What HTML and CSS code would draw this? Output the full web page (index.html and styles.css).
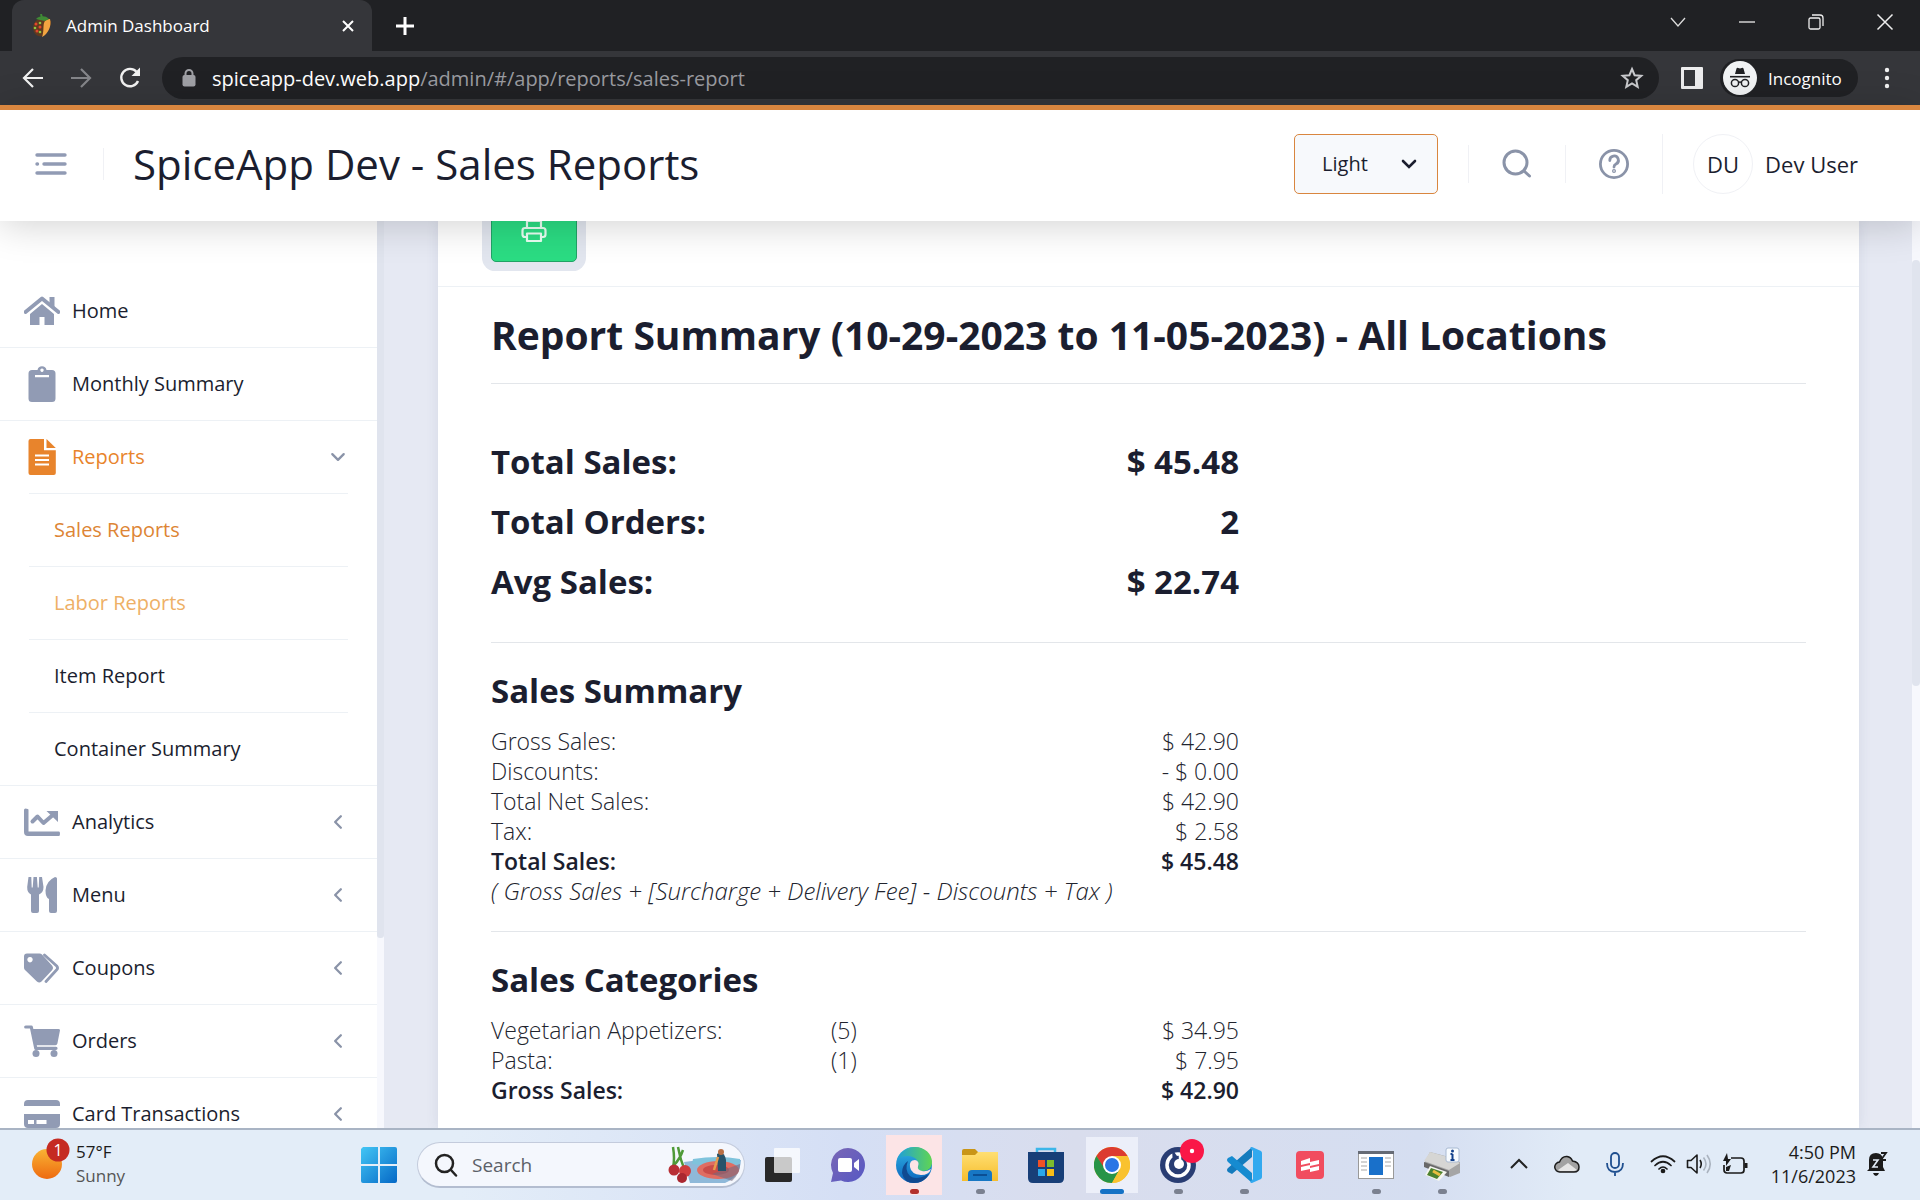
FILE: index.html
```html
<!DOCTYPE html>
<html lang="en">
<head>
<meta charset="utf-8">
<title>Admin Dashboard</title>
<link rel="stylesheet" href="styles.css">
</head>
<body>
<div class="tabstrip">
  <div class="tab">
    <svg class="favicon" width="22" height="24" viewBox="0 0 22 24"><path d="M11 4C4 5 0 12 3 18c2 4 5 5 8 4 6-3 9-9 9-15l-5-3z" fill="#5f3a1f"/><path d="M19 5c2 7-2 15-8 18 2-5 1-10 2-14 1-3 3-4 6-4z" fill="#f2a541"/><path d="M5 5c3-3 9-4 13 0l-4 2-5-1z" fill="#3f8a35"/><path d="M11 4l-1-4" stroke="#3f8a35" stroke-width="2"/><g fill="#e2462b"><circle cx="5" cy="10" r="1.5"/><circle cx="9" cy="13" r="1.5"/><circle cx="6" cy="17" r="1.5"/></g><g fill="#8fc63f"><circle cx="9" cy="9" r="1.3"/><circle cx="4" cy="14" r="1.3"/><circle cx="9" cy="18" r="1.3"/></g></svg>
    <span class="tab-title">Admin Dashboard</span>
    <button class="plain" aria-label="Close tab"><svg width="14" height="14" viewBox="0 0 14 14" fill="none" stroke="#fff" stroke-width="2"><path d="M2 2l10 10M12 2L2 12"/></svg></button>
  </div>
  <button class="plain new-tab" aria-label="New tab"><svg width="20" height="20" viewBox="0 0 20 20" fill="none" stroke="#fff" stroke-width="3"><path d="M10 1v18M1 10h18"/></svg></button>
  <div class="window-controls">
    <button class="plain" aria-label="Tab search"><svg width="18" height="18" viewBox="0 0 18 18" fill="none" stroke="#ddd" stroke-width="1.3"><path d="M2 5l7 8 7-8"/></svg></button>
    <button class="plain" aria-label="Minimize"><svg width="18" height="18" viewBox="0 0 18 18" stroke="#eee" stroke-width="1.3"><path d="M1 9h16"/></svg></button>
    <button class="plain" aria-label="Restore"><svg width="18" height="18" viewBox="0 0 18 18" fill="none" stroke="#eee" stroke-width="1.3"><rect x="2" y="5" width="11" height="11" rx="1.5"/><path d="M5 2h8q3 0 3 3v8"/></svg></button>
    <button class="plain" aria-label="Close"><svg width="18" height="18" viewBox="0 0 18 18" fill="none" stroke="#eee" stroke-width="1.5"><path d="M1.500 1.500l15 15M16.500 1.500l-15 15"/></svg></button>
  </div>
</div>
<div class="toolbar">
  <button class="plain" aria-label="Back"><svg width="22" height="22" viewBox="0 0 22 22" fill="none" stroke="#f1f1f1" stroke-width="2.200"><path d="M21 11H3M11 2l-9 9 9 9"/></svg></button>
  <button class="plain" aria-label="Forward"><svg width="22" height="22" viewBox="0 0 22 22" fill="none" stroke="#85868a" stroke-width="2.200"><path d="M1 11h18M11 2l9 9-9 9"/></svg></button>
  <button class="plain" aria-label="Reload"><svg width="24" height="24" viewBox="0 0 24 24"><path d="M20 15a8.700 8.700 0 1 1-1.500-9.200" fill="none" stroke="#f1f1f1" stroke-width="2.400"/><path d="M22 1.500V10h-8.500z" fill="#f1f1f1"/></svg></button>
  <div class="omnibox" role="textbox" aria-label="Address">
    <svg width="14" height="18" viewBox="0 0 14 18"><rect x="0.500" y="6" width="13" height="11.500" rx="2" fill="#9fa0a5"/><path d="M3.500 7V4.500a3.500 3.500 0 0 1 7 0V7" fill="none" stroke="#9fa0a5" stroke-width="2"/></svg>
    <span class="url"><b>spiceapp-dev.web.app</b>/admin/#/app/reports/sales-report</span>
    <button class="plain" aria-label="Bookmark"><svg width="24" height="24" viewBox="0 0 24 24" fill="none" stroke="#c9cacd" stroke-width="2"><path d="M12 3l2.600 6.200 6.700.6-5.100 4.400 1.500 6.600L12 17.300l-5.700 3.500 1.500-6.600-5.100-4.400 6.700-.6z"/></svg></button>
  </div>
  <button class="plain side-panel" aria-label="Side panel"><svg width="22" height="22" viewBox="0 0 22 22"><rect width="22" height="22" rx="1" fill="#ededee"/><rect x="3" y="3" width="11" height="16" fill="#35363a"/></svg></button>
  <div class="incognito">
    <svg width="34" height="34" viewBox="0 0 34 34"><circle cx="17" cy="17" r="17" fill="#f1f3f4"/><path d="M12 13l1.500-5.500q.5-1 1.700-.5l1.800.6 1.800-.6q1.200-.5 1.700.5L22 13z" fill="#202124"/><path d="M7 15.700h20" stroke="#202124" stroke-width="1.600"/><g fill="none" stroke="#202124" stroke-width="1.500"><circle cx="12" cy="22" r="3.600"/><circle cx="22" cy="22" r="3.600"/><path d="M15.500 21.500q1.500-1 3 0"/></g></svg>
    <span>Incognito</span>
  </div>
  <button class="plain" aria-label="Menu"><svg width="6" height="22" viewBox="0 0 6 22" fill="#f1f1f1"><circle cx="3" cy="3" r="2.200"/><circle cx="3" cy="11" r="2.200"/><circle cx="3" cy="19" r="2.200"/></svg></button>
</div>

<header class="app-header">
  <button class="plain burger" aria-label="Toggle menu"><svg width="32" height="24" viewBox="0 0 32 24" stroke="#919bb4" stroke-width="3.400" stroke-linecap="round"><path d="M2 3h28M9 12h21M2 12h.5M2 21h28"/></svg></button>
  <h1>SpiceApp Dev - Sales Reports</h1>
  <div class="header-tools">
    <label class="theme"><select aria-label="Theme"><option>Light</option></select><svg class="theme-arrow" width="16" height="12" viewBox="0 0 16 12" fill="none" stroke="#1b1e2f" stroke-width="2.600" stroke-linecap="round"><path d="M2 3l6 6 6-6"/></svg></label>
    <div class="tool"><button class="plain" aria-label="Search"><svg width="32" height="32" viewBox="0 0 32 32" fill="none" stroke="#8a93a8" stroke-width="3" stroke-linecap="round"><circle cx="14.500" cy="14.500" r="11.500"/><path d="M23 23l5.500 5"/></svg></button></div>
    <div class="tool"><button class="plain" aria-label="Help"><svg width="32" height="32" viewBox="0 0 32 32" fill="none" stroke="#8a93a8" stroke-width="2.800" stroke-linecap="round"><circle cx="16" cy="16" r="13.600"/><path d="M11.800 12.500a4.300 4.300 0 1 1 6.200 3.600q-2 1-2 3"/><circle cx="16" cy="23" r=".6"/></svg></button></div>
    <div class="user"><span class="avatar">DU</span><span>Dev User</span></div>
  </div>
</header>

<div class="workspace">
  <nav class="sidebar">
    <a class="item" href="#"><svg class="ico" viewBox="0 0 36 36"><path d="M1.500 19L18 5.500 34.500 19" fill="none" stroke="currentColor" stroke-width="3.800" stroke-linecap="round" stroke-linejoin="round"/><path d="M25.500 4h5v11l-5-4zM6 21l12-10 12 10v11h-9.500v-8h-5v8H6z" fill="currentColor"/></svg><span>Home</span></a>
    <a class="item" href="#"><svg class="ico" viewBox="0 0 36 36"><path fill="currentColor" fill-rule="evenodd" d="M8 4h5.500a4.600 4.600 0 0 1 9 0H28q3.500 0 3.500 3.500v25Q31.500 36 28 36H8q-3.500 0-3.500-3.500v-25Q4.500 4 8 4zm10-1.500a1.700 1.700 0 1 0 .01 0zM11 9v2.200h14V9z"/></svg><span>Monthly Summary</span></a>
    <a class="item active with-sub" href="#"><svg class="ico" viewBox="0 0 36 36"><path fill="currentColor" fill-rule="evenodd" d="M6 0h14v11.200h11.800V34q0 2-2 2H6.500q-2 0-2-2V2q0-2 2-2zM11 15.500v2h14v-2zM11 20v2h14v-2zM11 24.500v2h14v-2z"/><path d="M22.500 0l9.300 9H22.500z" fill="currentColor"/></svg><span>Reports</span><svg class="chev" viewBox="0 0 14 14"><path d="M2 4.500l5 5 5-5"/></svg></a>
    <div class="sub">
      <a class="current" href="#">Sales Reports</a>
      <a class="hovered" href="#">Labor Reports</a>
      <a href="#">Item Report</a>
      <a href="#">Container Summary</a>
    </div>
    <a class="item" href="#"><svg class="ico" viewBox="0 0 36 36"><path d="M1.500 4.500q3 0 3 1.500v21.500H35q1 0 1 2.200t-1 2.300H4q-4 0-4-4V6q0-1.500 1.500-1.500zM22.500 7H34v11z" fill="currentColor"/><path d="M8.500 17.500l5-5 6 6.500L30 10" fill="none" stroke="currentColor" stroke-width="4" stroke-linecap="round" stroke-linejoin="round"/></svg><span>Analytics</span><svg class="chev" viewBox="0 0 14 14"><path d="M9.500 2l-5 5 5 5"/></svg></a>
    <a class="item" href="#"><svg class="ico" viewBox="0 0 36 36"><path fill="currentColor" d="M4.500 0h2.800l.4 10.500h1L9.500 0h3.400l.8 10.500h1L15.200 0H18l1.500 10q0 5.500-4.500 7.500V34q0 2-2 2H9q-2 0-2-2V17.500Q3 15.500 3.200 10zM33 1.500V34q0 2-2 2h-4q-2 0-2-2V22q-3.500-1.500-3.500-8.500Q22 4 31 0q2 0 2 1.500z"/></svg><span>Menu</span><svg class="chev" viewBox="0 0 14 14"><path d="M9.500 2l-5 5 5 5"/></svg></a>
    <a class="item" href="#"><svg class="ico" viewBox="0 0 36 36"><path fill="currentColor" fill-rule="evenodd" d="M3 3.500h12.500q1.500 0 2.500 1L28 15.500q2 2.500 0 4.700L17.500 31.500q-2.300 2-4.600 0L1 20q-1-1-1-2.500v-11q0-3 3-3zM6 7a2.700 2.700 0 1 0 .01 0z"/><path d="M20.500 5L32.700 16q1.700 2 0 3.800L22 31.500" fill="none" stroke="currentColor" stroke-width="2.800" stroke-linecap="round"/></svg><span>Coupons</span><svg class="chev" viewBox="0 0 14 14"><path d="M9.500 2l-5 5 5 5"/></svg></a>
    <a class="item" href="#"><svg class="ico" viewBox="0 0 36 36"><path d="M1.700 4h5.600l4.500 21.300H32" fill="none" stroke="currentColor" stroke-width="3.200" stroke-linecap="round" stroke-linejoin="round"/><path d="M7 6h27.500q1.800 0 1.400 1.800l-2.500 12.700q-.4 1.700-2 1.700H10.300z" fill="currentColor"/><circle cx="12" cy="30.500" r="3.500" fill="currentColor"/><circle cx="30" cy="30.500" r="3.500" fill="currentColor"/></svg><span>Orders</span><svg class="chev" viewBox="0 0 14 14"><path d="M9.500 2l-5 5 5 5"/></svg></a>
    <a class="item" href="#"><svg class="ico" viewBox="0 0 36 36"><path fill="currentColor" fill-rule="evenodd" d="M4 4h28q4 0 4 4v2H0V8q0-4 4-4zM0 18h36v10q0 4-4 4H4q-4 0-4-4zm4 6v4h6v-4zm8.500 0v4h10v-4z"/></svg><span>Card Transactions</span><svg class="chev" viewBox="0 0 14 14"><path d="M9.500 2l-5 5 5 5"/></svg></a>
  </nav>
  <div class="side-scroll"><div class="side-thumb"></div></div>
  <main class="content">
    <section class="card">
      <div class="card-head"><button class="print" aria-label="Print"><svg width="26" height="24" viewBox="0 0 26 24" fill="none" stroke="#e9fff3" stroke-width="2.200" stroke-linejoin="round"><path d="M6 9V2h14v7M6 18H4q-2.500 0-2.500-2.500v-4Q1.500 9 4 9h18q2.500 0 2.500 2.500v4Q24.500 18 22 18h-2M6 14.500h14V22H6z"/></svg></button></div>
      <div class="report">
        <h2>Report Summary (10-29-2023 to 11-05-2023) - All Locations</h2>
        <hr>
        <table class="totals">
          <tr><th>Total Sales:</th><td>$ 45.48</td></tr>
          <tr><th>Total Orders:</th><td>2</td></tr>
          <tr><th>Avg Sales:</th><td>$ 22.74</td></tr>
        </table>
        <hr>
        <h3>Sales Summary</h3>
        <table class="lines">
          <tr><td>Gross Sales:</td><td></td><td class="amount">$ 42.90</td></tr>
          <tr><td>Discounts:</td><td></td><td class="amount">- $ 0.00</td></tr>
          <tr><td>Total Net Sales:</td><td></td><td class="amount">$ 42.90</td></tr>
          <tr><td>Tax:</td><td></td><td class="amount">$ 2.58</td></tr>
          <tr class="sum"><td>Total Sales:</td><td></td><td class="amount">$ 45.48</td></tr>
          <tr><td colspan="3"><em>( Gross Sales + [Surcharge + Delivery Fee] - Discounts + Tax )</em></td></tr>
        </table>
        <hr>
        <h3>Sales Categories</h3>
        <table class="lines">
          <tr><td>Vegetarian Appetizers:</td><td>(5)</td><td class="amount">$ 34.95</td></tr>
          <tr><td>Pasta:</td><td>(1)</td><td class="amount">$ 7.95</td></tr>
          <tr class="sum"><td>Gross Sales:</td><td></td><td class="amount">$ 42.90</td></tr>
        </table>
      </div>
    </section>
  </main>
  <div class="page-scroll"><div class="page-thumb"></div></div>
</div>

<footer class="taskbar">
  <div class="weather">
    <svg width="42" height="46" viewBox="0 0 42 46"><defs><linearGradient id="sun" x2="0" y2="1"><stop stop-color="#f9b434"/><stop offset="1" stop-color="#ee6a10"/></linearGradient></defs><circle cx="17" cy="27" r="15" fill="url(#sun)"/><circle cx="28" cy="13" r="11.500" fill="#c52b22"/><text x="28" y="19" class="badge-text">1</text></svg>
    <div><div>57°F</div><div class="dim">Sunny</div></div>
  </div>
  <div class="dock">
    <button class="plain app" aria-label="Start"><svg width="36" height="36" viewBox="0 0 36 36"><defs><linearGradient id="win" x2="1" y2="1"><stop stop-color="#43c6f5"/><stop offset="1" stop-color="#0568c6"/></linearGradient></defs><path fill="url(#win)" d="M2 0h15v17H0V2zM19 0h15q2 0 2 2v15H19zM0 19h17v17H2q-2 0-2-2zM19 19h17v15q0 2-2 2H19z"/></svg></button>
    <label class="search">
      <svg width="24" height="24" viewBox="0 0 24 24" fill="none" stroke="#222" stroke-width="2.500" stroke-linecap="round"><circle cx="10.500" cy="10.500" r="8.500"/><path d="M17 17l5 5.500"/></svg>
      <input type="text" placeholder="Search" aria-label="Search">
      <svg width="74" height="38" viewBox="0 0 74 38"><path d="M16 16q28-5 57-2-1 17-16 23H22z" fill="#8fb9d9"/><path d="M25 13q25-4 47 0v5q-20 4-48 0z" fill="#7fc3dc"/><ellipse cx="50" cy="24" rx="21" ry="9" fill="#df6d62"/><ellipse cx="48" cy="24" rx="13" ry="5" fill="#c94c48"/><path d="M44 28l28-10q1 8-8 17z" fill="#776b80" opacity=".6"/><path d="M49 8q7-4 9 6v11h-8z" fill="#27536a"/><circle cx="53" cy="6" r="3" fill="#b86f45"/><path d="M50 11l-4 13" stroke="#e79c4e" stroke-width="2.500"/><path d="M5 1q2 12 0 20M10 1q2 12 7 24M15 4q-3 9-9 15" fill="none" stroke="#4e9a37" stroke-width="2.500"/><circle cx="6" cy="24" r="5.500" fill="#b82f35"/><circle cx="17" cy="25" r="6" fill="#cf3c3d"/><circle cx="14" cy="32" r="5" fill="#aa2730"/></svg>
    </label>
    <button class="plain app" aria-label="Task view"><svg width="36" height="36" viewBox="0 0 36 36"><rect x="1" y="10" width="27" height="25" rx="2" fill="#292929"/><rect x="10" y="1" width="26" height="25" rx="1" fill="#fff" opacity=".75"/></svg></button>
    <button class="plain app" aria-label="Chat"><svg width="36" height="36" viewBox="0 0 36 36"><defs><linearGradient id="chat" x2="1" y2="1"><stop stop-color="#7a67b5"/><stop offset="1" stop-color="#5658c4"/></linearGradient></defs><path d="M18 1a17 17 0 1 1-7 32.500L1 35l2-9A17 17 0 0 1 18 1z" fill="url(#chat)"/><rect x="8" y="11" width="14" height="14" rx="2" fill="#fff"/><path d="M24 16l5-4v12l-5-4z" fill="#fff"/></svg></button>
    <button class="plain app edge-tile" aria-label="Edge"><svg width="36" height="36" viewBox="0 0 36 36"><defs><linearGradient id="e1" y2="1" x2="0"><stop stop-color="#2fb5e4"/><stop offset="1" stop-color="#0d63bd"/></linearGradient><linearGradient id="e2" x2="1"><stop stop-color="#1f9fd9"/><stop offset="1" stop-color="#60d552"/></linearGradient></defs><circle cx="18" cy="18" r="18" fill="url(#e1)"/><path d="M1 13C4 4 12 0 19 0c10 0 17 7 17 15 0 6-4 9-9 9-4 0-6-2-5-4 2-6-3-11-10-11C7 9 3 11 1 13z" fill="url(#e2)"/><path d="M12 14q-4 9 2 15 6 5 19-2-5 9-15 9Q8 36 6 26q0-8 6-12z" fill="#104a91"/><path d="M14 20q-1-7 5-7 5 1 3 6.500-1 3 4 4.500 4 1 9-2-2 6-10 6-10-1-11-8z" fill="#fce4e6"/></svg><i class="run red"></i></button>
    <button class="plain app" aria-label="File Explorer"><svg width="36" height="36" viewBox="0 0 36 36"><defs><linearGradient id="fold" x2="0" y2="1"><stop stop-color="#ffdf72"/><stop offset="1" stop-color="#f6bd2d"/></linearGradient></defs><path d="M0 4q0-2 2-2h11l3 3v5H0z" fill="#c99516"/><path d="M0 8h13l3-3h20v29H0z" fill="url(#fold)"/><path d="M6 34V27q0-4 4-4h16q4 0 4 4v7z" fill="#1777c4"/><path d="M11 28h14" stroke="#0b4f94" stroke-width="2"/></svg><i class="run"></i></button>
    <button class="plain app" aria-label="Store"><svg width="36" height="36" viewBox="0 0 36 36"><path d="M9 7V2h18v5" fill="none" stroke="#3cb6e9" stroke-width="2.500"/><path d="M0 5h36v26q0 5-5 5H5q-5 0-5-5z" fill="#183f78"/><path fill="#ef5126" d="M10 13h7v7h-7z"/><path fill="#7dbb2d" d="M19 13h7v7h-7z"/><path fill="#2ba8ea" d="M10 22h7v7h-7z"/><path fill="#f9bd16" d="M19 22h7v7h-7z"/></svg></button>
    <button class="plain app chrome-tile" aria-label="Chrome"><svg width="36" height="36" viewBox="0 0 36 36"><circle cx="18" cy="18" r="18" fill="#f9c22f"/><path d="M2.400 9A18 18 0 0 1 33.600 9L18 10l-7.500 13z" fill="#dc3b30"/><path d="M2.400 9A18 18 0 0 0 18 36l7.500-13.500L18 26l-7-4z" fill="#279447"/><path d="M18 9h15.600A18 18 0 0 1 18 36l7.800-13.500z" fill="#f9c22f"/><circle cx="18" cy="18" r="9" fill="#fff"/><circle cx="18" cy="18" r="7" fill="#2a75e5"/></svg><i class="run wide"></i></button>
    <button class="plain app" aria-label="Recorder"><svg class="badged" width="36" height="36" viewBox="0 0 36 36"><circle cx="18" cy="18" r="18" fill="#293d73"/><circle cx="18" cy="18" r="11" fill="none" stroke="#fff" stroke-width="3.500"/><path d="M12 2l10 14q1 6-3 7t-6-4z" fill="#293d73"/><circle cx="19" cy="17" r="5" fill="#fff"/><path d="M20 9v7" stroke="#fff" stroke-width="2.500"/><circle cx="32" cy="4" r="12" fill="#fa1747"/><circle cx="32" cy="4" r="2.200" fill="#fff"/></svg><i class="run"></i></button>
    <button class="plain app" aria-label="Code"><svg width="36" height="36" viewBox="0 0 36 36"><path d="M26 0v10L6 27l-4-2q-2-2 0-4L25 1z" fill="#147bbd"/><path d="M26 36V26L6 9l-4 2q-2 2 0 4l23 20z" fill="#168bd0"/><path d="M26 0l9 4q1 1 1 2v24q0 1-1 2l-9 4q-1 0-2-1l3-3V4l-3-3q1-1 2-1z" fill="#32a9ef"/></svg><i class="run"></i></button>
    <button class="plain app" aria-label="Notes"><svg width="28" height="28" viewBox="0 0 28 28"><rect width="28" height="28" rx="4" fill="#f14d5f"/><path d="M5 10l9-3v4l9-2v4l-9 2v-3l-9 2zM5 16l9-2v3l9-2v4l-9 2v-3l-9 2z" fill="#fff"/></svg></button>
    <button class="plain app" aria-label="Window"><svg width="36" height="28" viewBox="0 0 36 28"><rect x=".5" y=".5" width="35" height="27" fill="#fff" stroke="#999"/><path d="M0 1.500h36" stroke="#666b75" stroke-width="3"/><rect x="11" y="6" width="14" height="18" fill="#1970ca"/><path d="M3 7h6M3 11h6M3 15h6M3 19h6M27 7h6M27 11h6M27 15h6" stroke="#c5c5c5" stroke-width="1.500"/></svg><i class="run"></i></button>
    <button class="plain app" aria-label="Printer"><svg width="36" height="36" viewBox="0 0 36 36"><path d="M6 5l19 5 11 5v11l-10 4L0 17z" fill="#a5a5a5"/><path d="M6 5L0 14l25 9 11-7-12-6z" fill="#d6d6d4"/><path d="M0 15l25 9v6L0 20z" fill="#686868"/><path d="M6 19l17 6-8 9-14-6z" fill="#f5f5ef"/><path d="M7 21l12 4-6 7-10-4z" fill="#4d822e"/><path d="M9 24l7 4" stroke="#eabe40" stroke-width="3"/><rect x="22" y="1" width="13" height="14" rx="2" fill="#f7fbff" stroke="#a9bad2"/><path d="M28.500 7v6M26.500 13h4M26.500 7h2" stroke="#12408c" stroke-width="2"/><circle cx="28.500" cy="4" r="1.500" fill="#12408c"/></svg><i class="run"></i></button>
  </div>
  <div class="tray">
    <svg class="caret" width="18" height="12" viewBox="0 0 18 12" fill="none" stroke="#222" stroke-width="2"><path d="M1 10l8-8 8 8"/></svg>
    <svg class="cloud" width="26" height="18" viewBox="0 0 26 18"><path d="M6 17a5 5 0 0 1-.5-10Q8 1 13 1.500q4 .5 5.500 4.500Q25 7 25 12q0 5-5 5z" fill="#a2a2a2" stroke="#1b1b1b" stroke-width="1.500"/><path d="M4 15l10-7 9 7-3 1H6z" fill="#e5e5e5"/></svg>
    <svg class="mic" width="18" height="26" viewBox="0 0 18 26" fill="none" stroke="#1f4f8f" stroke-width="1.800"><rect x="5" y="2" width="8" height="15" rx="4"/><path d="M1 12q0 9 8 9t8-9M9 21v4"/></svg>
    <svg class="wifi" width="26" height="20" viewBox="0 0 26 20" fill="none" stroke="#1b1b1b" stroke-width="1.700" stroke-linecap="round"><path d="M1.500 7.500Q13-3 24.500 7.500M5 11.500q8-7.500 16 0M9 15q4-4 8 0"/><circle cx="13" cy="17" r="1.500" fill="#1b1b1b"/></svg>
    <svg class="speaker" width="26" height="22" viewBox="0 0 26 22" fill="none" stroke="#1b1b1b" stroke-width="1.600" stroke-linejoin="round"><path d="M1.500 7.500H5L11 2v18l-6-5.500H1.500zM14 7q2.500 4 0 8"/><path d="M17.500 4.500q5 6.500 0 13M21 2q6.500 9 0 18" stroke="#aab3bf"/></svg>
    <svg width="26" height="22" viewBox="0 0 26 22" fill="none" stroke="#1b1b1b" stroke-width="1.700"><path d="M9 5h10q3 0 3 3v9q0 3-3 3H5q-3 0-3-3v-5"/><path d="M24 10v5" stroke-width="3"/><path d="M5 0L1 8h3v5l5-7H6z" fill="#1b1b1b" stroke="none"/><path d="M4 18v-4l5-2-2 6z" fill="#1b1b1b" stroke="none"/></svg>
    <div class="clock"><div>4:50 PM</div><div>11/6/2023</div></div>
    <svg width="22" height="26" viewBox="0 0 22 26"><path d="M3 18V9q0-7 7-7 6 0 7 6v8l2 4H1zM7 22h6q-1 3-3 3t-3-3z" fill="#1b1b1b"/><path d="M7 9h5l-5 7h5" fill="none" stroke="#e4edf8" stroke-width="1.600"/><path d="M15 2h5l-5 7h5" fill="none" stroke="#1b1b1b" stroke-width="1.800"/></svg>
  </div>
</footer>
</body>
</html>
```
FILE: styles.css
```css
* { box-sizing: border-box; }
body {
  margin: 0;
  height: 100vh;
  display: flex;
  flex-direction: column;
  overflow: hidden;
  font-family: "Open Sans", "Noto Sans", sans-serif;
  color: #1b1e2f;
  background: #fff;
}
a { color: inherit; text-decoration: none; }
svg { display: block; flex: none; }
.plain {
  border: 0;
  padding: 0;
  background: none;
  display: grid;
  place-items: center;
  flex: none;
}

/* Browser chrome */
.tabstrip { height: 51px; flex: none; display: flex; align-items: flex-start; padding-left: 12px; background: #202124; }
.tab {
  width: 360px; height: 51px; padding: 0 17px 0 19px;
  display: flex; align-items: center; gap: 13px;
  background: #35363a; border-radius: 12px 12px 0 0;
  color: #fff; font-size: 17px;
}
.tab-title { flex: 1; }
.new-tab { height: 51px; margin-left: 23px; }
.window-controls { margin-left: auto; height: 44px; display: flex; align-items: center; gap: 51px; padding-right: 26px; }
.toolbar { height: 54px; flex: none; display: flex; align-items: center; padding: 0 30px 0 22px; gap: 26px; background: #35363a; }
.omnibox {
  flex: 1; height: 42px; margin-left: -6px; padding: 0 15px 0 20px;
  display: flex; align-items: center; gap: 16px;
  border-radius: 21px; background: #202124;
}
.url { flex: 1; font-size: 20px; color: #9a9ba0; }
.url b { font-weight: 400; color: #fff; }
.side-panel { margin-left: -4px; }
.incognito {
  width: 138px; height: 38px; padding-left: 3px; margin-left: -9px;
  display: flex; align-items: center; gap: 11px;
  border-radius: 19px; background: #202124; color: #fff; font-size: 17px;
}

/* Application header */
.app-header {
  position: relative; z-index: 2;
  height: 116px; flex: none;
  display: flex; align-items: center;
  padding: 0 62px 4px 35px;
  border-top: 5px solid #d9863f;
  background: #fff;
  box-shadow: 0 4px 36px rgba(0, 0, 0, .18);
}
.burger { height: 32px; padding-right: 36px; border-right: 1px solid #f0f1f5; }
.app-header h1 { margin: 0 0 0 29px; font-size: 42px; line-height: 56px; font-weight: 400; white-space: nowrap; }
.header-tools { margin-left: auto; display: flex; align-items: center; font-size: 22px; }
.theme { position: relative; margin-right: 30px; }
.theme select {
  appearance: none; display: block; width: 144px; height: 60px; padding: 0 27px;
  border: 1px solid #d9863f; border-radius: 5px; background: #f7f9fc;
  font: 500 20px "Open Sans", sans-serif; color: #1b1e2f;
}
.theme-arrow { position: absolute; right: 21px; top: 24px; }
.tool { width: 97px; height: 38px; display: grid; place-items: center; border-left: 1px solid #f0f1f5; }
.user { height: 60px; padding-left: 30px; display: flex; align-items: center; gap: 12px; border-left: 1px solid #f0f1f5; }
.avatar { width: 60px; height: 60px; display: grid; place-items: center; border: 1px solid #f0f1f5; border-radius: 50%; }

/* Sidebar */
.workspace { flex: 1; min-height: 0; display: flex; overflow: hidden; background: #e6e9f3; }
.sidebar { width: 377px; flex: none; padding-top: 54px; background: #fff; font-size: 20px; font-weight: 500; }
.item {
  height: 73px; padding: 0 31px 0 24px;
  display: flex; align-items: center; gap: 12px;
  border-bottom: 1px solid #edf1f5;
}
.item span { flex: 1; padding-bottom: 2px; }
.ico { width: 36px; height: 36px; color: #919bb4; }
.chev { width: 16px; height: 16px; fill: none; stroke: #8a93a8; stroke-width: 2; stroke-linecap: round; stroke-linejoin: round; }
.active, .active .ico { color: #e8842c; }
.with-sub { height: 72px; border-bottom: 0; }
.sub { border-bottom: 1px solid #edf1f5; padding: 0 29px; }
.sub a { height: 73px; padding: 0 0 2px 25px; display: flex; align-items: center; border-top: 1px solid #edf1f5; }
.current { color: #dd8535; }
.hovered { color: #eeb066; }
.side-scroll { width: 7px; flex: none; background: #f7f8fd; }
.side-thumb { height: 79%; background: #e0e4ee; border-radius: 0 0 3px 3px; }

/* Report */
.content { flex: 1; min-width: 0; padding: 0 53px 0 54px; }
.card { min-height: 100%; background: #fff; box-shadow: 0 0 12px rgba(60, 80, 120, .1); }
.card-head { height: 66px; padding: 0 53px 24px; display: flex; align-items: flex-end; border-bottom: 1px solid #edf1f5; }
.print {
  width: 86px; height: 58px; flex: none; padding: 0 0 4px; display: grid; place-items: center;
  border: 1px solid #21a366; border-radius: 5px; background: #2bdc83;
  box-shadow: 0 0 0 9px #e2e6ef;
}
.report { padding: 20px 53px; }
.report h2 { margin: 0; font-size: 39px; line-height: 56px; font-weight: 700; white-space: nowrap; }
.report hr { margin: 20px 0 0; border: 0; border-top: 1px solid #e3e6ea; }
.report h3 { margin: 23px 0 10px; font-size: 33px; line-height: 50px; font-weight: 700; }
.report table { width: 748px; border-collapse: collapse; }
.report th, .report td { padding: 0; text-align: left; }
.totals { margin: 48px 0 0; font-size: 33px; line-height: 60px; font-weight: 700; }
.report .totals + hr { margin-top: 30px; }
.report .totals td, .report .amount { text-align: right; }
.lines { table-layout: fixed; font-size: 23px; line-height: 30px; font-weight: 300; color: #22242e; }
.lines td:first-child { width: 340px; white-space: nowrap; }
.lines em { font-size: 24px; }
.lines .sum { font-weight: 600; color: #1b1e2f; }
.report .lines + hr { margin-top: 25px; }
.page-scroll { width: 8px; flex: none; background: #f7f8fd; }
.page-thumb { margin-top: 39px; height: 47%; background: #e0e4ee; border-radius: 4px; }

/* Taskbar */
.taskbar {
  height: 72px; flex: none; position: relative; z-index: 3;
  display: flex; align-items: center; padding: 0 32px 0 30px;
  border-top: 2px solid #a9b4c4;
  background: linear-gradient(90deg, #e3edf8 24%, #d5dff5 44%, #d9dded 56%, #d5def1 74%, #e1ebf7 82%);
  font-size: 17px; line-height: 24px; color: #1b1b1b;
}
.weather { width: 316px; display: flex; align-items: center; gap: 4px; padding-bottom: 2px; }
.weather svg { margin-top: -8px; }
.badge-text { font-size: 16px; fill: #fff; text-anchor: middle; }
.dim { color: #555; }
.dock { display: flex; align-items: center; }
.app { position: relative; width: 66px; height: 60px; }
.search {
  width: 328px; height: 46px; padding: 0 2px 0 16px; margin: 0 4px 0 5px;
  display: flex; align-items: center; gap: 14px;
  border: 1px solid #c3cbdc; border-bottom: 2px solid #b3bdd0; border-radius: 23px; background: #f4f7fd;
}
.search input { flex: 1; min-width: 0; border: 0; padding: 0; background: none; outline: 0; font: 19px "Open Sans", sans-serif; }
.search input::placeholder { color: #5c6068; opacity: 1; }
.edge-tile { background: linear-gradient(#fce4e6, #fce4e6) center / 56px 60px no-repeat; }
.chrome-tile { background: linear-gradient(#eceff9, #eceff9) center / 52px 56px no-repeat; }
.badged { overflow: visible; }
.run { position: absolute; bottom: 1px; left: 29px; width: 9px; height: 5px; border-radius: 3px; background: #7b8190; }
.run.red { background: #b3302c; }
.run.wide { left: 21px; width: 24px; background: #1572c5; }
.tray { margin-left: auto; display: flex; align-items: center; gap: 10px; padding-bottom: 2px; }
.tray .caret { margin-right: 16px; }
.tray .cloud { margin-right: 16px; }
.tray .mic { margin-right: 16px; }
.clock { min-width: 98px; font-size: 18px; text-align: right; }
```
